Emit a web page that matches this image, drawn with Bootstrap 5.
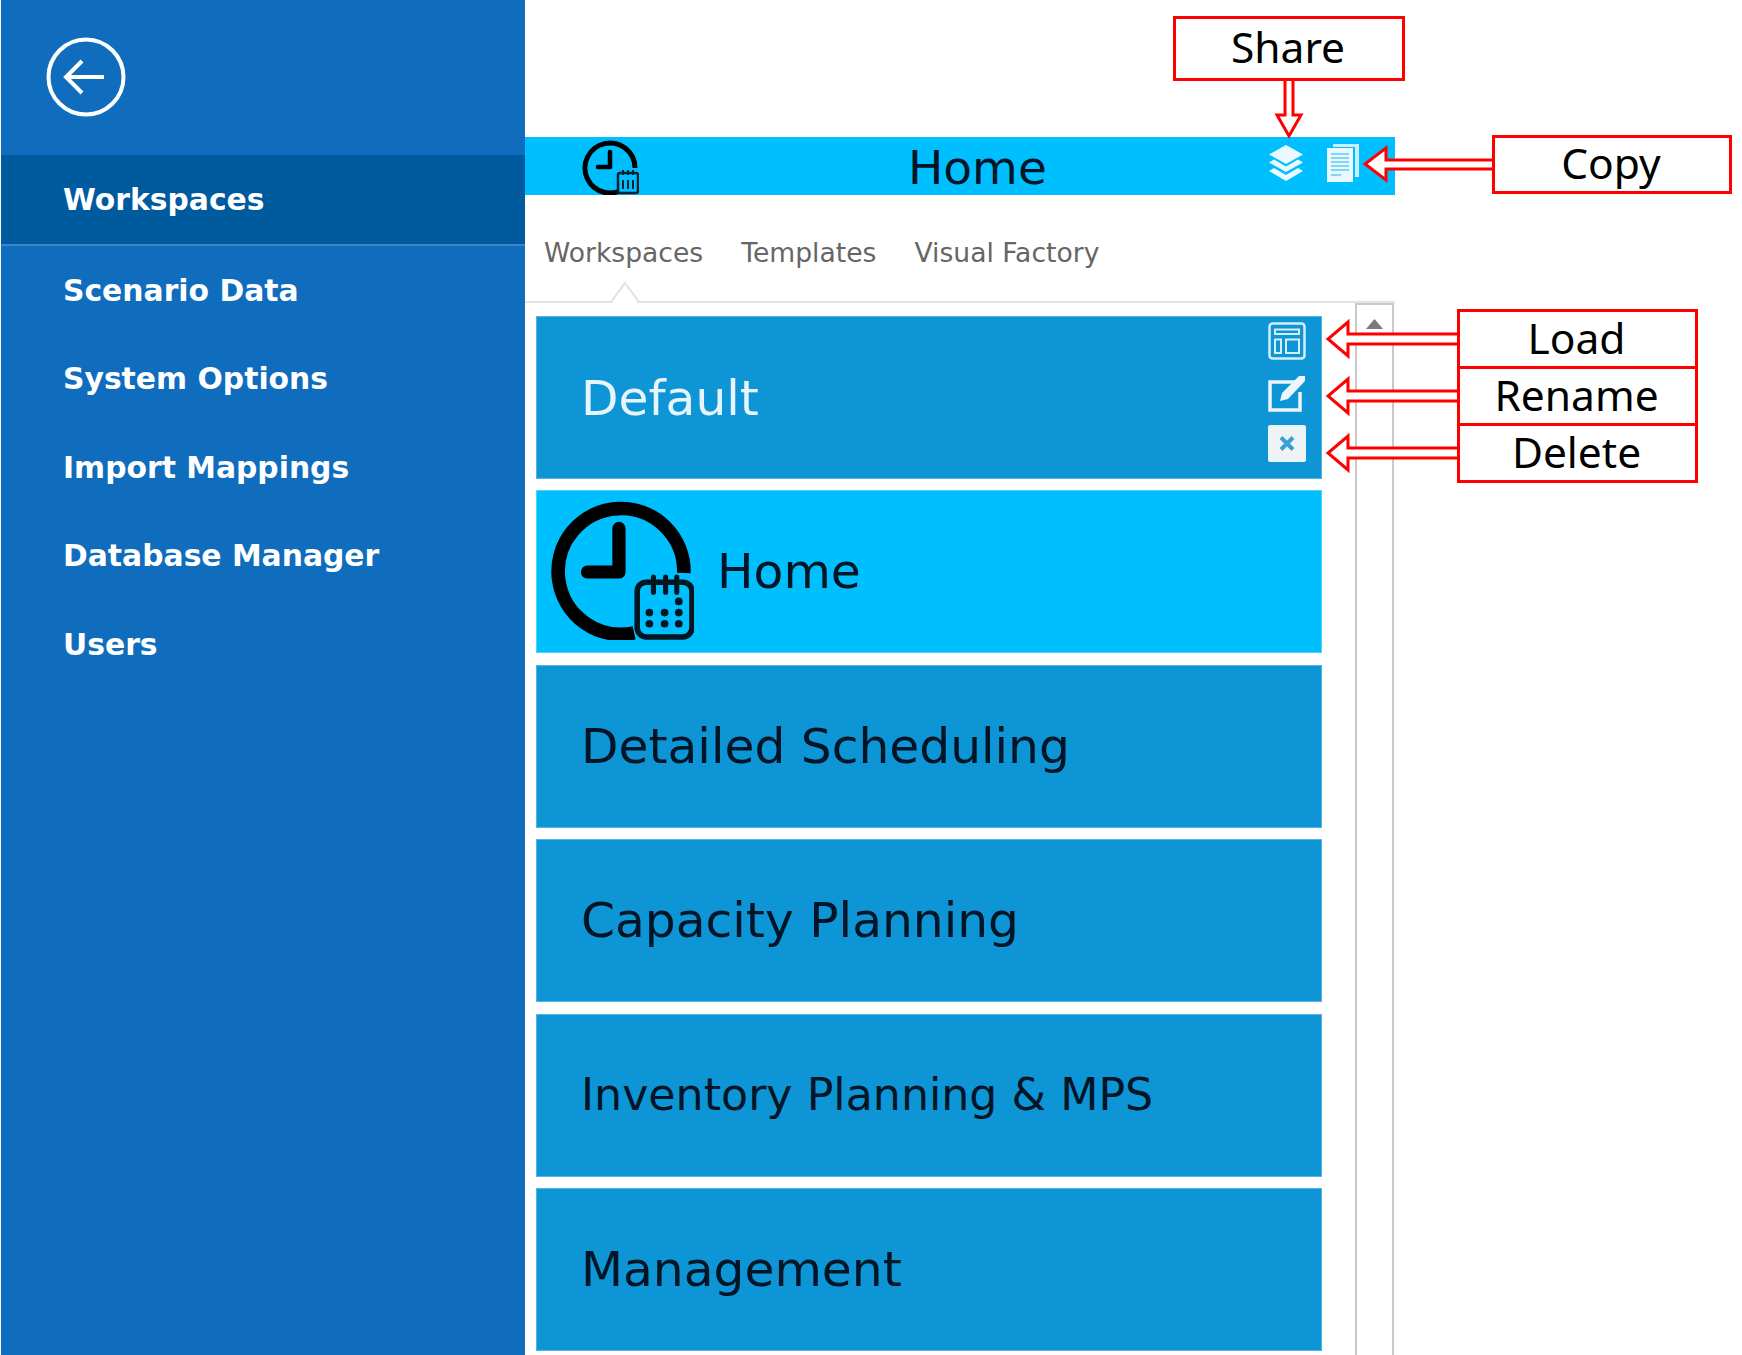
<!DOCTYPE html>
<html lang="en">
<head>
<meta charset="utf-8">
<title>Workspaces</title>
<link href="https://cdn.jsdelivr.net/npm/bootstrap@5.3.0/dist/css/bootstrap.min.css" rel="stylesheet">
<style>
html,body{height:1355px;overflow:hidden}
body{background:#fff;font-family:"DejaVu Sans",sans-serif;position:relative;padding-left:1px}
.shell{height:1355px}
.side{width:524px;background:#106dbe;flex:none}
.side-top{height:155px;padding:37px 0 0 45px}
.side-link{display:flex;align-items:center;height:88.5px;padding:2px 0 0 62px;color:#fff;font-weight:700;font-size:29.800px;text-decoration:none}
.side-link.on{background:#005a9e;height:91px;border-bottom:2px solid #3a84ca}
.work{width:870px;padding-top:137px;flex:none}
.hbar{height:58px;background:#00bfff;color:#021527;padding-right:36px}
.hbar-clock{margin-left:57px;width:57px;height:57px;flex:none}
.hbar-title{margin-left:269px;font-size:47px;line-height:58px;padding-top:4px}
.hbar-tools{gap:23px;padding:0 0 6px 0}
.tabbar{height:108px;border-bottom:2px solid #e3e3e3;padding:42px 0 0 19px;gap:38px;position:relative}
.tabbar a{font-size:26.600px;line-height:32px;color:#666;text-decoration:none}
.notch{position:absolute;left:86px;bottom:-2px}
.below{height:1052px}
.stack{width:830px;padding:13px 0 0 11px;gap:11.400px;flex:none}
.tile{width:786px;height:163px;flex:none;background:#0e95d5;border:1px solid #52b4e4;color:#021527;font-size:48.700px;padding-left:44px}
.tile.cur{background:#00bfff;border-color:#4cd2ff;padding-left:14px;gap:23px}
.tile.cur svg{margin-bottom:4px;flex:none}
.tile.def{color:#e6f4fb;padding-right:15px}
.tile.def>span{padding-top:2px}
.tile.inv{font-size:44.300px}
.tile-tools{padding-top:5px;gap:13.500px}
.tile-tools svg{display:block}
.rail{width:39px;border:solid #c9c9c9;border-width:2px 2px 0 2px;padding:14px 0 0 9px}
.callout{position:absolute;border:3px solid #f00;background:#fff;color:#000;font-family:"Noto Sans",sans-serif;font-size:42.500px;display:flex;align-items:center;justify-content:center;line-height:1;padding:0 2px 2px 0}
.arrows{position:absolute;left:0;top:0;pointer-events:none}
.c-share{left:1173px;top:16px;width:232px;height:65px}
.c-copy{left:1492px;top:135px;width:240px;height:59px}
.c-load{left:1457px;top:309px;width:241px;height:60px}
.c-rename{left:1457px;top:366px;width:241px;height:60px}
.c-delete{left:1457px;top:423px;width:241px;height:60px}
</style>
</head>
<body>
<div class="shell d-flex">
  <aside class="side d-flex flex-column">
    <div class="side-top">
      <svg width="80" height="80" viewBox="0 0 80 80" aria-label="Back"><circle cx="40" cy="40" r="37.500" fill="none" stroke="#fff" stroke-width="4"/><path d="M58 40H20M36 24 20 40l16 16" fill="none" stroke="#fff" stroke-width="4"/></svg>
    </div>
    <nav class="nav flex-column">
      <a class="side-link on" href="#">Workspaces</a>
      <a class="side-link" href="#">Scenario Data</a>
      <a class="side-link" href="#">System Options</a>
      <a class="side-link" href="#">Import Mappings</a>
      <a class="side-link" href="#">Database Manager</a>
      <a class="side-link" href="#">Users</a>
    </nav>
  </aside>
  <main class="work d-flex flex-column">
    <div class="hbar d-flex align-items-center">
      <svg class="hbar-clock" viewBox="0 0 57 57"><path d="M43 50A25 25 0 1 1 53 30" fill="none" stroke="#000" stroke-width="5"/><path d="M28 14V29H16" fill="none" stroke="#000" stroke-width="4.500" stroke-linecap="round" stroke-linejoin="round"/><rect x="36" y="35" width="20" height="20" rx="2" fill="#00bfff" stroke="#04222f" stroke-width="2.500"/><path d="M41 32v5M46 32v5M51 32v5M41 42v9M46 42v9M51 42v9" stroke="#04222f" stroke-width="2"/></svg>
      <span class="hbar-title">Home</span>
      <div class="hbar-tools d-flex align-items-center ms-auto">
        <svg width="36" height="36" viewBox="0 0 36 36" aria-label="Share"><path d="M18 0 35 9.500 18 19 1 9.500Z" fill="#eaf8ff"/><path d="M6 14.500 1 17.500 18 27 35 17.500 30 14.500 18 21.500Z" fill="#eaf8ff"/><path d="M6 23 1 26 18 36 35 26 30 23 18 30Z" fill="#eaf8ff"/></svg>
        <svg width="32" height="38" viewBox="0 0 32 38" aria-label="Copy"><path d="M6 0H32V33H28V3H6Z" fill="#c9effd"/><rect y="4" width="26" height="34" fill="#eaf8ff"/><path d="M4 10H22M4 14H22M4 18H22M4 22H22M4 26H22M4 31H14" stroke="#7fd6f7" stroke-width="2"/></svg>
      </div>
    </div>
    <div class="tabbar nav flex-nowrap">
      <a href="#">Workspaces</a>
      <a href="#">Templates</a>
      <a href="#">Visual Factory</a>
      <svg class="notch" width="28" height="22" viewBox="0 0 28 22"><path d="M0 21 14 2 28 21" fill="#fff" stroke="#e3e3e3" stroke-width="2"/><rect x="2" y="20" width="24" height="2" fill="#fff"/></svg>
    </div>
    <div class="below d-flex">
      <div class="stack d-flex flex-column">
        <div class="tile def d-flex align-items-center justify-content-between">
          <span>Default</span>
          <div class="tile-tools d-flex flex-column align-self-start">
            <svg width="38" height="38" viewBox="0 0 38 38" aria-label="Load"><rect x="1.500" y="1.500" width="35" height="35" rx="3" fill="none" stroke="#d6eef9" stroke-width="2.500"/><path d="M7 7.500H31V12H7ZM7 17.500H13V31H7ZM18 17.500H31V31H18Z" fill="none" stroke="#d6eef9" stroke-width="2"/></svg>
            <svg width="38" height="38" viewBox="0 0 38 38" aria-label="Rename"><path d="M27 8H2V36H32V18" fill="none" stroke="#eaf6fc" stroke-width="3.500"/><path d="M12 27 14 19 31 2 37 2 37 7 20 25Z" fill="#eaf6fc"/></svg>
            <svg width="38" height="37" viewBox="0 0 38 37" aria-label="Delete"><rect width="38" height="37" rx="2" fill="#eef3f5"/><path d="M13 12.500 25 24.500M25 12.500 13 24.500" stroke="#3c9fd6" stroke-width="4"/></svg>
          </div>
        </div>
        <div class="tile cur d-flex align-items-center">
          <svg width="143" height="140" viewBox="0 0 141 138"><path d="M82 131A62 62 0 1 1 131 72" fill="none" stroke="#000" stroke-width="13.500"/><path d="M67 28V71H36" fill="none" stroke="#000" stroke-width="13" stroke-linecap="round" stroke-linejoin="round"/><rect x="85" y="81" width="54" height="54" rx="9" fill="#00bfff" stroke="#04161f" stroke-width="5.500"/><path d="M101 76V91M113 76V91M124 76V91" stroke="#04161f" stroke-width="5" stroke-linecap="round"/><g fill="#04161f"><circle cx="126" cy="100" r="3.800"/><circle cx="97" cy="111" r="3.800"/><circle cx="112" cy="111" r="3.800"/><circle cx="126" cy="111" r="3.800"/><circle cx="97" cy="122" r="3.800"/><circle cx="112" cy="122" r="3.800"/><circle cx="126" cy="122" r="3.800"/></g></svg>
          <span>Home</span>
        </div>
        <div class="tile d-flex align-items-center"><span>Detailed Scheduling</span></div>
        <div class="tile d-flex align-items-center"><span>Capacity Planning</span></div>
        <div class="tile inv d-flex align-items-center"><span>Inventory Planning &amp; MPS</span></div>
        <div class="tile d-flex align-items-center"><span>Management</span></div>
      </div>
      <div class="rail">
        <svg class="d-block" width="17" height="10" viewBox="0 0 17 10"><path d="M8.500 0 17 10H0Z" fill="#7a7a7a"/></svg>
      </div>
    </div>
  </main>
</div>
<svg class="arrows" width="1742" height="1355" viewBox="0 0 1742 1355">
  <g fill="#fff" stroke="#f00" stroke-width="3">
    <path d="M1285 80V115H1277L1289 136 1301 115H1293V80"/>
    <path d="M1494 160H1386V148L1365 164 1386 180V169H1494"/>
    <path d="M1459 334H1348V322L1328 339 1348 356V344H1459"/>
    <path d="M1459 391H1348V379L1328 396 1348 413V401H1459"/>
    <path d="M1459 448H1348V436L1328 453 1348 470V458H1459"/>
  </g>
</svg>
<div class="callout c-share">Share</div>
<div class="callout c-copy">Copy</div>
<div class="callout c-load">Load</div>
<div class="callout c-rename">Rename</div>
<div class="callout c-delete">Delete</div>
<script src="https://cdn.jsdelivr.net/npm/bootstrap@5.3.0/dist/js/bootstrap.bundle.min.js"></script>
</body>
</html>
